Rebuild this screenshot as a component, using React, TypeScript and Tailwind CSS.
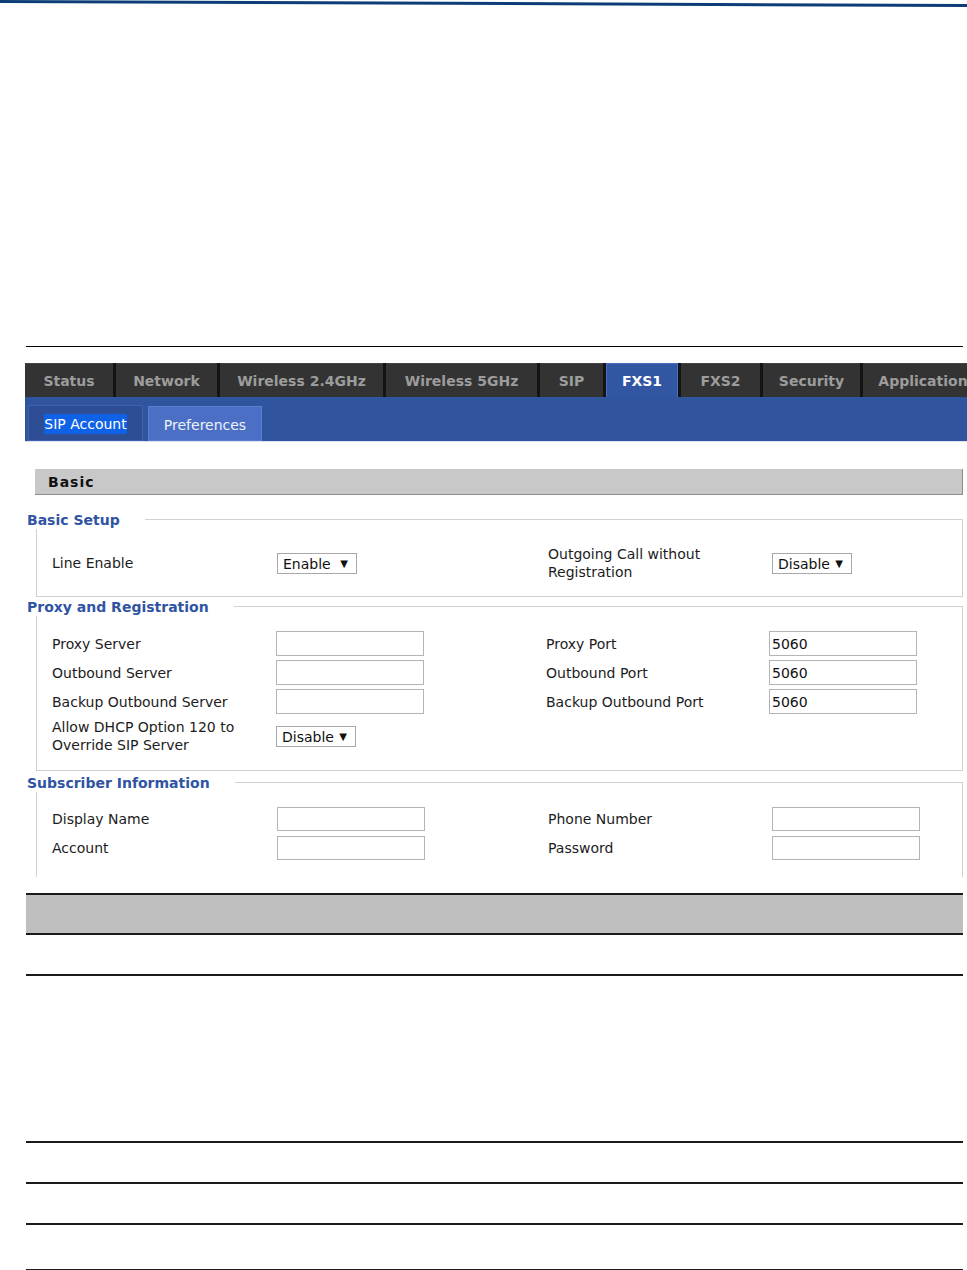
import React from 'react';

const tabs = [
  { name: 'Status', w: 'w-[88px]' },
  { name: 'Network', w: 'w-[101px]' },
  { name: 'Wireless 2.4GHz', w: 'w-[163px]' },
  { name: 'Wireless 5GHz', w: 'w-[151px]' },
  { name: 'SIP', w: 'w-[63px]' },
  { name: 'FXS1', w: 'w-[72px]', active: true },
  { name: 'FXS2', w: 'w-[79px]' },
  { name: 'Security', w: 'w-[97px]' },
  { name: 'Application', w: 'w-[120px]' },
];

function Select({ value }: { value: string }) {
  return (
    <div className="flex h-[21px] w-[80px] items-center border border-[#a8a8a8] bg-white pl-[5px] pr-[8px] pt-[1px] text-[14px] leading-none text-[#111]">
      <span>{value}</span>
      <span className="ml-auto text-[10px]">▼</span>
    </div>
  );
}

function Input({ value = '', h = 'h-[25px]' }: { value?: string; h?: string }) {
  return (
    <div className={`flex ${h} w-[148px] items-center border border-[#b4b4b4] bg-white pl-[2px] pt-[2px] text-[14px] text-[#111]`}>
      {value}
    </div>
  );
}

function Legend({ children }: { children: React.ReactNode }) {
  return (
    <div className="absolute left-[-10px] top-[-9px] bg-white pr-[25px] text-[14px] font-bold leading-[18px] text-[#3054a3]">
      {children}
    </div>
  );
}

function Label({ children }: { children: React.ReactNode }) {
  return <div className="text-[14px] leading-[18px] text-[#1c1c1c]">{children}</div>;
}

function Rule() {
  return <div className="ml-[26px] h-[2px] w-[937px] bg-[#1a1a1a]" />;
}

export default function App() {
  return (
    <div className="relative h-[1270px] w-[967px] overflow-hidden bg-white font-['DejaVu_Sans',sans-serif]">
      <svg width="967" height="10" className="block">
        <polygon points="0,0 967,4 967,7 0,3" fill="#0c3d78" />
      </svg>

      <div className="h-[336px]" />
      <div className="ml-[26px] h-px w-[937px] bg-black" />

      {/* main tab bar */}
      <div className="ml-[25px] mt-[16px] flex h-[34px] w-[960px] gap-[3px] bg-[#141414]">
        {tabs.map((t) =>
          t.active ? (
            <div
              key={t.name}
              className={`${t.w} flex shrink-0 items-center justify-center border-x border-t border-[#4a70c2] bg-[#3156a2] pt-[1px] text-[14px] font-bold text-white`}
            >
              {t.name}
            </div>
          ) : (
            <div
              key={t.name}
              className={`${t.w} flex shrink-0 items-center justify-center border-t border-[#444] bg-[#333333] pt-[2px] text-[14px] font-bold text-[#9c9c9c]`}
            >
              {t.name}
            </div>
          )
        )}
      </div>

      {/* sub tab bar */}
      <div className="ml-[25px] flex h-[44px] w-[942px] items-end gap-[5px] bg-[#31549e] pl-[3px]">
        <div className="flex h-[36px] w-[115px] items-center justify-center border border-[#3e62ae] bg-[#2d4e94] pt-[2px] text-[14px] text-white">
          <span className="bg-[#0f62e6] leading-[20px]">SIP Account</span>
        </div>
        <div className="flex h-[35px] w-[114px] items-center justify-center border border-[#5b7fd0] bg-[#4a6fc5] pt-[3px] text-[14px] text-[#eef2fa]">
          Preferences
        </div>
      </div>
      <div className="ml-[25px] h-px w-[942px] bg-[#dde3ee]" />

      {/* Basic header */}
      <div className="ml-[35px] mt-[27px] flex h-[26px] w-[928px] items-center border-b border-r border-[#8c8c8c] bg-[#c8c8c8] pl-[13px] pt-[2px] text-[14px] font-bold tracking-[1px] text-[#111]">
        Basic
      </div>

      {/* Basic Setup */}
      <div className="relative ml-[36px] mt-[24px] h-[78px] w-[927px] border border-[#d0d0d0]">
        <Legend>Basic Setup</Legend>
        <div className="grid grid-cols-[225px_271px_224px_auto] items-center pl-[15px] pt-[25px]">
          <Label>Line Enable</Label>
          <Select value="Enable" />
          <div className="flex h-[36px] flex-col justify-center">
            <Label>Outgoing Call without</Label>
            <Label>Registration</Label>
          </div>
          <Select value="Disable" />
        </div>
      </div>

      {/* Proxy and Registration */}
      <div className="relative ml-[36px] mt-[9px] h-[165px] w-[927px] border border-[#d0d0d0]">
        <Legend>Proxy and Registration</Legend>
        <div className="grid grid-cols-[224px_270px_223px_auto] items-center gap-y-[4px] pl-[15px] pt-[24px]">
          <Label>Proxy Server</Label>
          <Input />
          <Label>Proxy Port</Label>
          <Input value="5060" />

          <Label>Outbound Server</Label>
          <Input />
          <Label>Outbound Port</Label>
          <Input value="5060" />

          <Label>Backup Outbound Server</Label>
          <Input />
          <Label>Backup Outbound Port</Label>
          <Input value="5060" />

          <div className="flex h-[36px] flex-col justify-center">
            <Label>Allow DHCP Option 120 to</Label>
            <Label>Override SIP Server</Label>
          </div>
          <Select value="Disable" />
          <div />
          <div />
        </div>
      </div>

      {/* Subscriber Information */}
      <div className="relative ml-[36px] mt-[11px] h-[95px] w-[927px] border-x border-t border-[#d0d0d0]">
        <Legend>Subscriber Information</Legend>
        <div className="grid grid-cols-[225px_271px_224px_auto] items-center gap-y-[5px] pl-[15px] pt-[24px]">
          <Label>Display Name</Label>
          <Input h="h-[24px]" />
          <Label>Phone Number</Label>
          <Input h="h-[24px]" />

          <Label>Account</Label>
          <Input h="h-[24px]" />
          <Label>Password</Label>
          <Input h="h-[24px]" />
        </div>
      </div>

      {/* table lines below */}
      <div className="mt-[16px]">
        <Rule />
        <div className="ml-[26px] h-[38px] w-[937px] bg-[#bfbfbf]" />
        <Rule />
        <div className="h-[39px]" />
        <Rule />
        <div className="h-[165px]" />
        <Rule />
        <div className="h-[39px]" />
        <Rule />
        <div className="h-[39px]" />
        <Rule />
        <div className="h-[44px]" />
        <Rule />
      </div>
    </div>
  );
}
